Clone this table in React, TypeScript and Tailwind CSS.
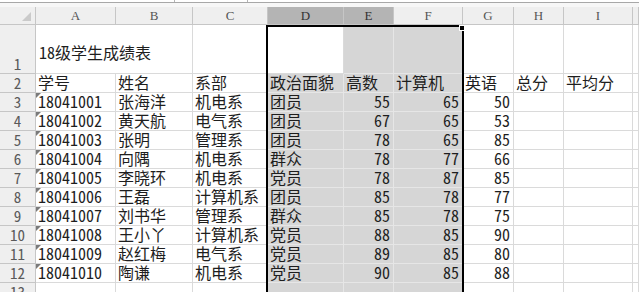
const FONT = { fontFamily: '"Noto Sans Mono CJK SC", "Noto Sans CJK SC", sans-serif' }

const letters = ["A", "B", "C", "D", "E", "F", "G", "H", "I", ""]

const students: [string, string, string, string, number, number, number][] = [
  ["18041001", "张海洋", "机电系", "团员", 55, 65, 50],
  ["18041002", "黄天航", "电气系", "团员", 67, 65, 53],
  ["18041003", "张明", "管理系", "团员", 78, 65, 85],
  ["18041004", "向隅", "机电系", "群众", 78, 77, 66],
  ["18041005", "李晓环", "机电系", "党员", 78, 87, 85],
  ["18041006", "王磊", "计算机系", "团员", 85, 78, 77],
  ["18041007", "刘书华", "管理系", "群众", 85, 78, 75],
  ["18041008", "王小丫", "计算机系", "党员", 88, 85, 90],
  ["18041009", "赵红梅", "电气系", "党员", 89, 85, 80],
  ["18041010", "陶谦", "机电系", "党员", 90, 85, 88],
]

const headers = ["学号", "姓名", "系部", "政治面貌", "高数", "计算机", "英语", "总分", "平均分", ""]

// columns D, E, F (index 3..5) are inside the selection
const inSel = (c: number) => c >= 3 && c <= 5

function RowHead({ n, bottom }: { n: number; bottom?: boolean }) {
  return (
    <div
      className={`flex justify-center border-r border-b border-[#c6c6c6] bg-[#efefef] text-[15px] text-[#5a5a5a] ${bottom ? "items-end" : "items-center"}`}
    >
      <span className="leading-[18px]">{n}</span>
    </div>
  )
}

function Cell({
  c,
  children,
  right,
  flag,
  white,
}: {
  c: number
  children?: React.ReactNode
  right?: boolean
  flag?: boolean
  white?: boolean
}) {
  const sel = inSel(c) && !white
  return (
    <div
      className={`relative flex items-end whitespace-nowrap border-r border-b pb-[1px] text-[16px] leading-[18px] text-[#1e1e1e] ${
        sel ? "bg-[#d6d6d6] border-[#e6e6e6]" : "bg-white border-[#dadada]"
      } ${right ? "justify-end pr-[3px]" : "pl-[2px]"}`}
    >
      {flag && (
        <svg className="absolute left-0 top-0" width="5" height="5" viewBox="0 0 5 5">
          <polygon points="0,0 5,0 0,5" fill="#7a7a7a" />
        </svg>
      )}
      {children}
    </div>
  )
}

function Row({ n, s }: { n: number; s: [string, string, string, string, number, number, number] }) {
  return (
    <>
      <RowHead n={n} />
      <Cell c={0} flag>
        {s[0]}
      </Cell>
      <Cell c={1}>{s[1]}</Cell>
      <Cell c={2}>{s[2]}</Cell>
      <Cell c={3}>{s[3]}</Cell>
      <Cell c={4} right>
        {s[4]}
      </Cell>
      <Cell c={5} right>
        {s[5]}
      </Cell>
      <Cell c={6} right>
        {s[6]}
      </Cell>
      <Cell c={7} />
      <Cell c={8} />
      <Cell c={9} />
    </>
  )
}

export default function App() {
  return (
    <div className="h-[292px] w-[639px] overflow-hidden bg-white" style={FONT}>
      {/* formula bar remnant */}
      <div className="flex h-[2px] bg-white">
        <div className="w-[175px] border-r border-[#b5b5b5]" />
        <div className="w-[73px] border-r border-[#b5b5b5]" />
      </div>
      <div className="h-px bg-[#a8a8a8]" />
      <div className="h-[4px] bg-[#f7f7f7]" />

      <div className="relative">
        <div className="grid grid-cols-[36px_80px_77px_75px_76px_50px_69px_51px_50px_69px_1fr] grid-rows-[18px_49px_19px_repeat(11,19px)]">
          {/* column header row */}
          <div className="relative border-r border-b border-[#c6c6c6] bg-[#efefef]">
            <svg className="absolute right-[4px] bottom-[3px]" width="9" height="9" viewBox="0 0 9 9">
              <polygon points="9,0 9,9 0,9" fill="#cacaca" />
            </svg>
          </div>
          {letters.map((l, i) => (
            <div
              key={i}
              className={`flex items-center justify-center border-r border-b border-[#c6c6c6] text-[13px] ${
                i === 3 || i === 4 ? "bg-[#b4b4b4] text-[#333]" : "bg-[#efefef] text-[#555]"
              }`}
              style={{ fontFamily: '"Liberation Serif", serif' }}
            >
              {l}
            </div>
          ))}

          {/* row 1: title, overflowing across A:B */}
          <RowHead n={1} bottom />
          <div className="col-span-2 flex items-center whitespace-nowrap border-r border-b border-[#dadada] bg-white pl-[3px] pt-[5px] text-[16px] text-[#1e1e1e]">
            18级学生成绩表
          </div>
          <div className="border-r border-b border-[#dadada] bg-white" />
          {Array.from({ length: 7 }).map((_, k) => (
            <Cell key={k} c={k + 3} white={k === 0} />
          ))}

          {/* row 2: headers */}
          <RowHead n={2} />
          {headers.map((t, i) => (
            <Cell key={i} c={i}>
              {t}
            </Cell>
          ))}

          {/* rows 3..12 */}
          {students.map((s, r) => (
            <Row key={s[0]} n={r + 3} s={s} />
          ))}

          {/* row 13 (cut off) */}
          <RowHead n={13} />
          {Array.from({ length: 10 }).map((_, i) => (
            <Cell key={i} c={i} />
          ))}
        </div>

        {/* selection border D1:F13 */}
        <div className="absolute left-[266px] top-[18px] h-[300px] w-[198px] border-x-2 border-t-2 border-black" />
        {/* fill handle */}
        <div className="absolute left-[459px] top-[18px] h-[6px] w-[6px] border border-white bg-black" />
      </div>
    </div>
  )
}
